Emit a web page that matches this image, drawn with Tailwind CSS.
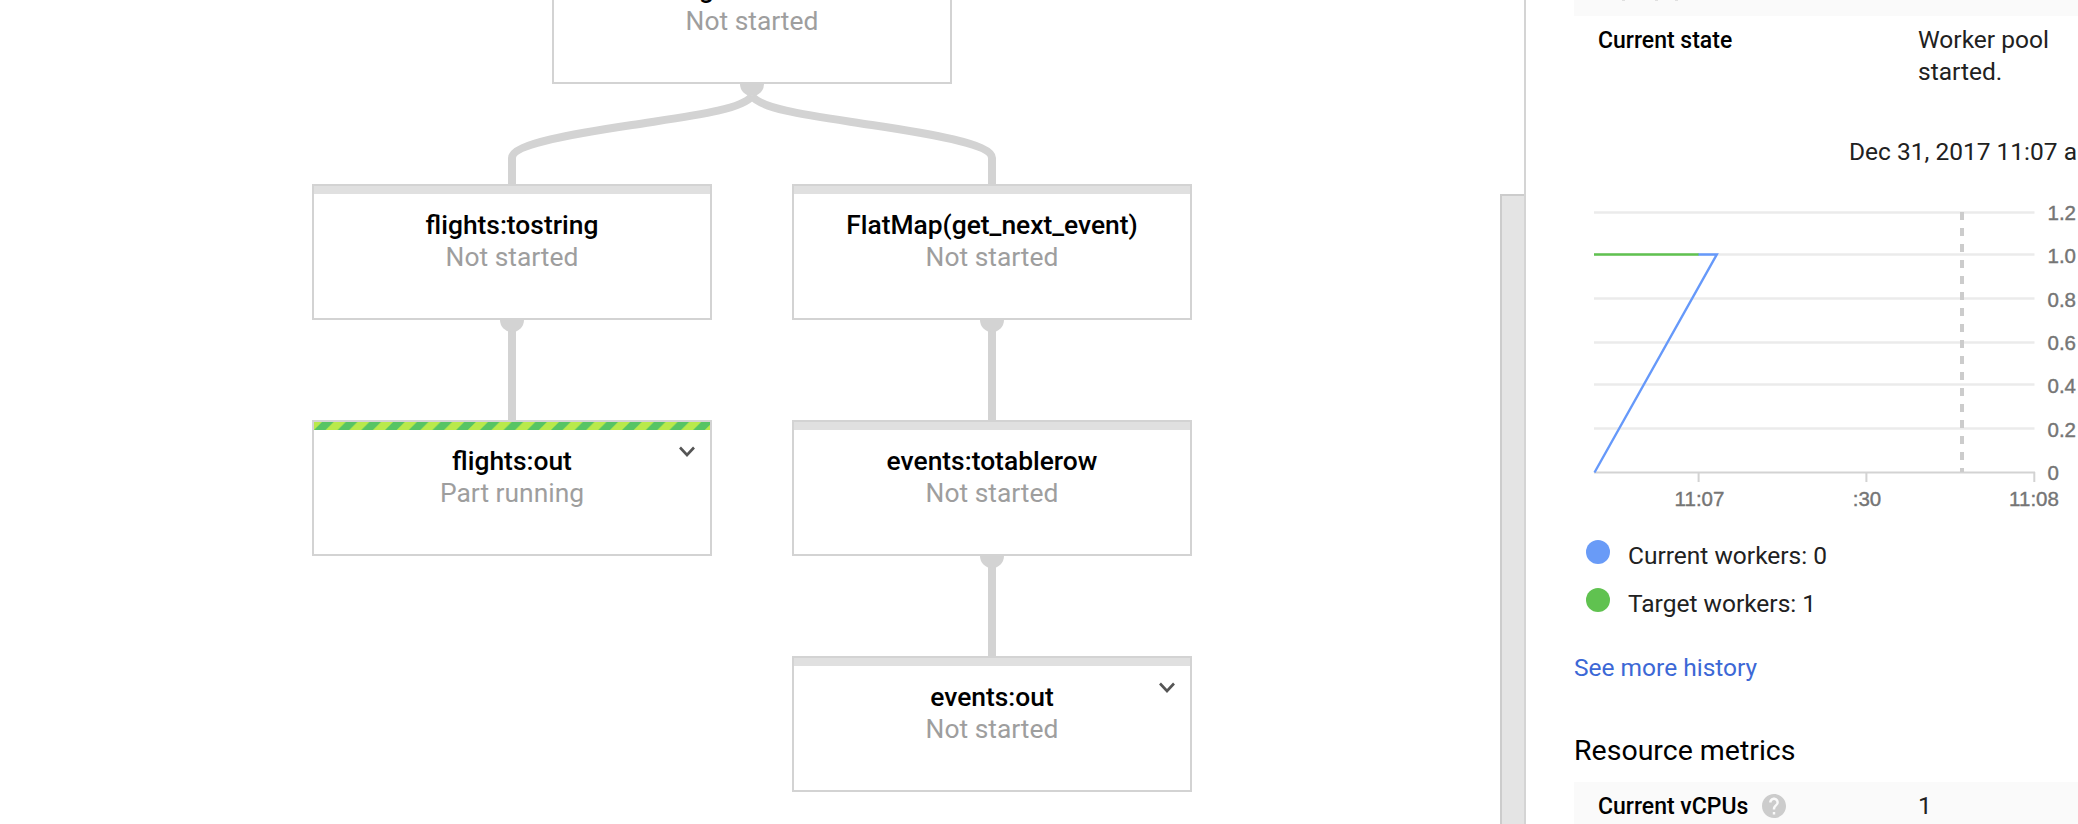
<!DOCTYPE html>
<html lang="en">
<head>
<meta charset="utf-8">
<title>Dataflow job</title>
<script src="https://cdn.jsdelivr.net/npm/@tailwindcss/browser@4"></script>
</head>
<body class="bg-white">
<div class="flex h-[824px] w-[2078px] overflow-hidden bg-white font-['Roboto',sans-serif] text-[24.5px] leading-8 text-[#212121]">

  <main class="relative h-full w-[1500px] shrink-0 overflow-hidden text-[26.4px]">
    <svg class="absolute left-0 top-0" width="1500" height="824" fill="none" stroke="#d3d3d3" stroke-width="8">
      <path d="M752 96C742 110 690 116 632 125C575 133.500 512 144 512 158V184"/>
      <path d="M752 96C762 110 814 116 872 125C929 133.500 992 144 992 158V184"/>
      <path d="M512 330V420M992 330V420M992 566V656"/>
      <g fill="#d3d3d3" stroke="none">
        <circle cx="752" cy="84" r="12"/><circle cx="512" cy="320" r="12"/><circle cx="992" cy="320" r="12"/><circle cx="992" cy="556" r="12"/>
      </g>
    </svg>

    <section class="absolute left-[552px] top-[-52px] h-[136px] w-[400px] border-2 border-[#d3d3d3] bg-white text-center">
      <div class="h-2 bg-[#e0e0e0]"></div>
      <h3 class="mt-[15px] font-medium text-black">flights:tzcorr</h3>
      <p class="text-[#9e9e9e]">Not started</p>
    </section>
    <section class="absolute left-[312px] top-[184px] h-[136px] w-[400px] border-2 border-[#d3d3d3] bg-white text-center">
      <div class="h-2 bg-[#e0e0e0]"></div>
      <h3 class="mt-[15px] font-medium text-black">flights:tostring</h3>
      <p class="text-[#9e9e9e]">Not started</p>
    </section>
    <section class="absolute left-[792px] top-[184px] h-[136px] w-[400px] border-2 border-[#d3d3d3] bg-white text-center">
      <div class="h-2 bg-[#e0e0e0]"></div>
      <h3 class="mt-[15px] font-medium text-black">FlatMap(get_next_event)</h3>
      <p class="text-[#9e9e9e]">Not started</p>
    </section>
    <section class="absolute left-[312px] top-[420px] h-[136px] w-[400px] border-2 border-[#d3d3d3] bg-white text-center">
      <svg class="block" width="396" height="8">
        <defs><pattern id="stripe" width="23.7" height="8" patternUnits="userSpaceOnUse"><path fill="#b9e94b" d="M0 0H23.7V8H0z"/><path fill="#57c464" d="M8 0H19.6L11.6 8H0z"/></pattern></defs>
        <rect width="396" height="8" fill="url(#stripe)"/>
      </svg>
      <h3 class="mt-[15px] font-medium text-black">flights:out</h3>
      <p class="text-[#9e9e9e]">Part running</p>
      <svg class="absolute right-[15px] top-[24px]" width="16" height="12" fill="none" stroke="#555" stroke-width="2.6"><path d="M1 1.500L8 9L15 1.500"/></svg>
    </section>
    <section class="absolute left-[792px] top-[420px] h-[136px] w-[400px] border-2 border-[#d3d3d3] bg-white text-center">
      <div class="h-2 bg-[#e0e0e0]"></div>
      <h3 class="mt-[15px] font-medium text-black">events:totablerow</h3>
      <p class="text-[#9e9e9e]">Not started</p>
    </section>
    <section class="absolute left-[792px] top-[656px] h-[136px] w-[400px] border-2 border-[#d3d3d3] bg-white text-center">
      <div class="h-2 bg-[#e0e0e0]"></div>
      <h3 class="mt-[15px] font-medium text-black">events:out</h3>
      <p class="text-[#9e9e9e]">Not started</p>
      <svg class="absolute right-[15px] top-[24px]" width="16" height="12" fill="none" stroke="#555" stroke-width="2.6"><path d="M1 1.500L8 9L15 1.500"/></svg>
    </section>
  </main>

  <div class="flex w-6 shrink-0 flex-col pt-[194px]"><div class="flex-1 border-l-2 border-t-2 border-[#ccc] bg-[#e4e4e4]"></div></div>

  <aside class="flex w-[554px] shrink-0 flex-col overflow-hidden border-l-2 border-[#d4d4d4] pl-12">
    <div class="flex h-4 shrink-0 bg-[#fafafa] pl-12">
      <span class="h-px w-[3px] bg-[#e0e0e0]"></span><span class="ml-[30px] h-px w-[3px] bg-[#e0e0e0]"></span><span class="ml-[17px] h-px w-[3px] bg-[#e0e0e0]"></span>
    </div>
    <div class="flex h-[84px] shrink-0 pl-6 pt-2">
      <div class="w-80 shrink-0 pt-px text-[23px] font-medium text-black">Current state</div>
      <div class="w-[150px]">Worker pool started.</div>
    </div>
    <div class="h-[92px] shrink-0 whitespace-nowrap pl-[275px] pt-9">Dec 31, 2017 11:07 am</div>

    <svg class="block shrink-0" width="504" height="332" viewBox="1574 192 504 332" font-family="Liberation Sans" font-size="20.5" fill="#757575">
      <g stroke="#ebebeb" stroke-width="2.4">
        <path d="M1594 212.5H2034.5M1594 254.5H2034.5M1594 298.5H2034.5M1594 342.5H2034.5M1594 384.5H2034.5M1594 428.5H2034.5"/>
      </g>
      <path d="M1594 472.5H2035M1698.600 472V482M1866.400 472V482M2034.300 472V482" stroke="#d3d3d3" stroke-width="2" fill="none"/>
      <path d="M1962 212V472" stroke="#ccc" stroke-width="4" stroke-dasharray="8 8"/>
      <path d="M1594.500 472.500L1716.800 254.500H1698" stroke="#6699fa" stroke-width="2.4" fill="none"/>
      <path d="M1594 254.5H1698.500" stroke="#60c250" stroke-width="2.6"/>
      <g stroke="#757575" stroke-width=".4">
        <text x="2047.500" y="220">1.2</text><text x="2047.500" y="263">1.0</text><text x="2047.500" y="307">0.8</text><text x="2047.500" y="350">0.6</text><text x="2047.500" y="393">0.4</text><text x="2047.500" y="437">0.2</text><text x="2047.500" y="480">0</text>
        <g text-anchor="middle"><text x="1699.500" y="506">11:07</text><text x="1867" y="506">:30</text><text x="2034" y="506">11:08</text></g>
      </g>
    </svg>

    <div class="flex h-12 shrink-0 gap-[18px] pl-3 pt-4"><span class="h-6 w-6 rounded-full bg-[#699bf7]"></span><span>Current workers: 0</span></div>
    <div class="flex h-12 shrink-0 gap-[18px] pl-3 pt-4"><span class="h-6 w-6 rounded-full bg-[#60c250]"></span><span>Target workers: 1</span></div>
    <a class="mt-8 shrink-0 text-[#3c68d6]">See more history</a>
    <h2 class="mt-[51px] shrink-0 text-[28.5px] text-black">Resource metrics</h2>
    <div class="mt-[15px] flex h-12 shrink-0 bg-[#fafafa] pl-6 pt-2">
      <div class="flex w-80 shrink-0 pt-px text-[23px] font-medium text-black">Current vCPUs
        <svg class="ml-3.5 mt-[3px]" width="24" height="24" viewBox="2 2 20 20" fill="#ccc"><path d="M12 2C6.48 2 2 6.48 2 12s4.480 10 10 10 10-4.480 10-10S17.520 2 12 2zm1 17h-2v-2h2v2zm2.070-7.750l-.9.920C13.450 12.900 13 13.500 13 15h-2v-.5c0-1.100.450-2.100 1.170-2.830l1.240-1.260c.370-.360.590-.860.590-1.410 0-1.100-.9-2-2-2s-2 .9-2 2H8c0-2.210 1.790-4 4-4s4 1.790 4 4c0 .880-.360 1.680-.930 2.250z"/></svg>
      </div>
      <div>1</div>
    </div>
  </aside>
</div>
</body>
</html>
